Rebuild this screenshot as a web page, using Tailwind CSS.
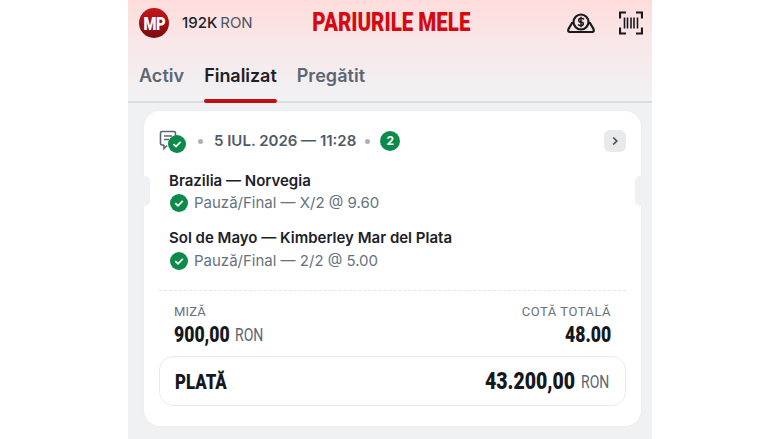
<!DOCTYPE html>
<html><head><meta charset="utf-8"><script src="https://cdn.jsdelivr.net/npm/@tailwindcss/browser@4"></script></head>
<body class="bg-white font-['Inter',sans-serif] overflow-hidden">
<div class="w-[524px] h-[439px] ml-[128px] bg-[#eff1f3] overflow-hidden">
  <div class="h-[103px] bg-gradient-to-b from-[#ffdcdc] via-[#f9e7e8] via-40% to-[#f0f2f4] border-b-2 border-[#d9dcdf] relative">
    <div class="h-[46px] flex items-center justify-between pl-[11px] pr-[9px]">
      <div class="flex items-center w-[170px]">
        <div class="w-[30px] h-[30px] rounded-full bg-gradient-to-b from-[#c8161c] to-[#7a0a0e] flex items-center justify-center shrink-0"><span class="text-white font-['Roboto',sans-serif] font-black text-[18px] scale-x-[.82] tracking-[-0.5px]">MP</span></div>
        <div class="ml-[13px] text-[15px] text-[#1c2128] font-medium whitespace-nowrap">192K <span class="font-normal text-[#4b5563] ml-[-1px]">RON</span></div>
      </div>
      <div class="font-['Roboto',sans-serif] font-black text-[25px] leading-[30px] mt-[-1px] text-[#d50a11] whitespace-nowrap origin-center scale-x-[.82]">PARIURILE MELE</div>
      <div class="flex items-center gap-[24px] w-[170px] justify-end">
        <svg class="w-[28px] h-[20px]" viewBox="0 0 28 20" fill="none" stroke="#16191d" stroke-width="2.2"><circle cx="14" cy="9" r="7.5"/><path d="M6.5 10 H5 L1.5 16 Q0.5 19 3 19 H25 Q27.5 19 26.5 16 L23 10 H21.5"/><path d="M17 6.5 Q16 5.3 14 5.3 Q11.7 5.3 11.7 7.2 Q11.7 9 14 9 Q16.3 9 16.3 10.8 Q16.3 12.7 14 12.7 Q12 12.7 11 11.5 M14 3.8 V14.2" stroke-width="1.5"/></svg>
        <svg class="w-[24px] h-[24px]" viewBox="0 0 24 24" fill="none" stroke="#16191d"><path d="M1 7.5 V1.5 H7 M17 1.5 H23 V7.5 M1 16.5 V22.5 H7 M17 22.5 H23 V16.5" stroke-width="2.2"/><path d="M5.5 6.5 V17.5 M8.5 6.5 V17.5 M12 6.5 V17.5 M15 6.5 V17.5 M18.5 6.5 V17.5" stroke-width="1.6"/></svg>
      </div>
    </div>
    <div class="flex pl-[11px] gap-[20px] mt-[18px] text-[18px] font-semibold leading-[24px] text-[#5b6673] tracking-[0.05px]">
      <span>Activ</span>
      <span class="text-[#1c2128] relative tracking-[-0.05px]">Finalizat<i class="absolute left-0 right-0 top-[35px] h-[4px] rounded-full bg-[#c20e14]"></i></span>
      <span>Pregătit</span>
    </div>
  </div>
  <div class="relative mt-[8px] ml-[16px] w-[497px] h-[315px] bg-white rounded-[16px] pt-[18px] shadow-[0_0_3px_rgba(0,0,0,0.03)]">
    <i class="absolute left-[-8px] top-[65px] w-[14px] h-[30px] bg-[#eff1f3] rounded-[5px]"></i>
    <i class="absolute right-[-8px] top-[65px] w-[14px] h-[30px] bg-[#eff1f3] rounded-[5px]"></i>
    <div class="flex items-center h-[24px] pl-[15px] pr-[15px]">
      <div class="relative w-[28px] h-[24px]">
        <svg class="absolute left-0 top-[1px] w-[20px] h-[20px]" viewBox="0 0 20 20" fill="none" stroke="#5b6673" stroke-width="1.6"><path d="M5 15 H3 Q1.5 15 1.5 13.5 V3 Q1.5 1.5 3 1.5 H15 Q16.5 1.5 16.5 3 V8 M5 15 V18.5 L8 15.5"/><path d="M5 6 H13 M5 9.5 H10"/></svg>
        <svg class="absolute left-[9px] top-[6px] w-[18px] h-[18px]" viewBox="0 0 18 18"><circle cx="9" cy="9" r="9" fill="#0b8a4a"/><path d="M5.5 9.2 L8 11.6 L12.6 6.8" fill="none" stroke="#fff" stroke-width="1.8"/></svg>
      </div>
      <i class="ml-[11px] w-[5px] h-[5px] rounded-full bg-[#aab1b9]"></i>
      <span class="ml-[11px] text-[15px] font-semibold text-[#4f5b67] whitespace-nowrap">5 IUL. 2026 — 11:28</span>
      <i class="ml-[9px] w-[5px] h-[5px] rounded-full bg-[#aab1b9]"></i>
      <span class="ml-[10px] w-[20px] h-[20px] rounded-full bg-[#0b8a4a] text-white text-[12px] font-bold flex items-center justify-center">2</span>
      <span class="ml-auto w-[22px] h-[22px] rounded-[6px] bg-[#e7e9eb] flex items-center justify-center"><svg class="w-[10px] h-[10px]" viewBox="0 0 10 10" fill="none" stroke="#3f4955" stroke-width="1.6"><path d="M3.2 1.5 L6.8 5 L3.2 8.5"/></svg></span>
    </div>
    <div class="pl-[25px] mt-[18px]">
      <div class="text-[15px] leading-[20px] font-semibold text-[#1c2128]">Brazilia — Norvegia</div>
      <div class="flex items-center mt-[2px] h-[20px] text-[15px] text-[#68727e]">
        <svg class="w-[18px] h-[18px] ml-[1px] mr-[6px]" viewBox="0 0 18 18"><circle cx="9" cy="9" r="9" fill="#0b8a4a"/><path d="M5.3 9.2 L8 11.8 L12.8 6.8" fill="none" stroke="#fff" stroke-width="1.8"/></svg>Pauză/Final — X/2 @ 9.60</div>
      <div class="text-[15px] leading-[20px] font-semibold text-[#1c2128] mt-[15px]">Sol de Mayo — Kimberley Mar del Plata</div>
      <div class="flex items-center mt-[3px] h-[20px] text-[15px] text-[#68727e]">
        <svg class="w-[18px] h-[18px] ml-[1px] mr-[6px]" viewBox="0 0 18 18"><circle cx="9" cy="9" r="9" fill="#0b8a4a"/><path d="M5.3 9.2 L8 11.8 L12.8 6.8" fill="none" stroke="#fff" stroke-width="1.8"/></svg>Pauză/Final — 2/2 @ 5.00</div>
    </div>
    <div class="mx-[15px] mt-[19px] border-t border-dashed border-[#e3e5e8]"></div>
    <div class="flex justify-between px-[30px] mt-[13px] font-['Roboto',sans-serif]">
      <div>
        <div class="text-[13px] leading-[16px] text-[#68727e] tracking-[0.2px]">MIZĂ</div>
        <div class="mt-[3px] h-[24px] leading-[24px] flex whitespace-nowrap"><span class="w-[55px] origin-left scale-x-[.8] font-black text-[22px] text-[#15181c]">900,00</span><span class="ml-[6px] origin-left scale-x-[.78] text-[18px] text-[#5b6673]">RON</span></div>
      </div>
      <div class="text-right">
        <div class="text-[13px] leading-[16px] text-[#68727e] tracking-[0.5px]">COTĂ TOTALĂ</div>
        <div class="mt-[3px] h-[24px] leading-[24px] origin-right scale-x-[.8] font-black text-[22px] text-[#15181c]">48.00</div>
      </div>
    </div>
    <div class="mx-[15px] mt-[9px] h-[50px] rounded-[14px] border border-[#e9ebed] flex items-center justify-between pl-[15px] pr-[16px] font-['Roboto',sans-serif]">
      <span class="origin-left scale-x-[.8] font-black text-[21px] mt-[3px] text-[#15181c]">PLATĂ</span>
      <span class="flex items-center whitespace-nowrap"><span class="origin-right scale-x-[.81] w-[90px] flex justify-end font-black text-[24px] text-[#15181c]">43.200,00</span><span class="w-[28px] ml-[6px] origin-left scale-x-[.78] text-[18px] text-[#5b6673]">RON</span></span>
    </div>
  </div>
</div>
</body></html>
